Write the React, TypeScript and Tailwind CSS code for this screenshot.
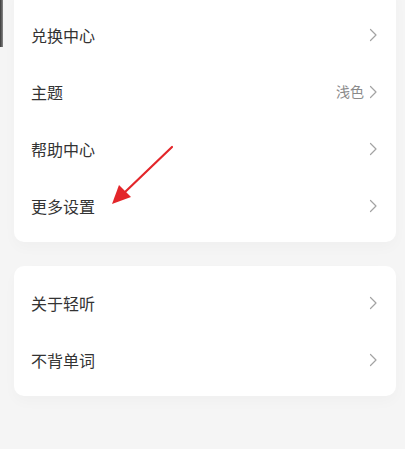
import React from 'react';

const Chevron: React.FC = () => (
  <svg width="8" height="14" viewBox="0 0 8 14" fill="none" className="shrink-0">
    <path d="M1.5 1.5L7 7L1.5 12.5" stroke="#a3a3a3" strokeWidth="1.2" strokeLinecap="round" strokeLinejoin="round" />
  </svg>
);

type Item = { label: string; value?: string };

const Row: React.FC<{ item: Item }> = ({ item }) => (
  <div className="h-[57px] flex items-center justify-between pl-[17px] pr-[19px]">
    <span className="text-[16px] text-[#333333]">{item.label}</span>
    <div className="flex items-center gap-[5px]">
      {item.value && <span className="text-[14px] text-[#8a8a8a]">{item.value}</span>}
      <Chevron />
    </div>
  </div>
);

const Card: React.FC<{ items: Item[]; className?: string }> = ({ items, className }) => (
  <div className={`bg-white rounded-[10px] py-[8px] shadow-[0_6px_14px_rgba(0,0,0,0.025)] ${className ?? ''}`}>
    {items.map((it) => (
      <Row key={it.label} item={it} />
    ))}
  </div>
);

export default function App() {
  return (
    <div
      className="relative w-[405px] h-[449px] overflow-hidden bg-[#f5f5f5] pl-[14px] pr-[9px]"
      style={{ fontFamily: '"Noto Sans CJK SC", "Noto Sans", sans-serif' }}
    >
      <Card
        className="-mt-[14px] pt-[20px]"
        items={[{ label: '兑换中心' }, { label: '主题', value: '浅色' }, { label: '帮助中心' }, { label: '更多设置' }]}
      />
      <Card className="mt-[24px]" items={[{ label: '关于轻听' }, { label: '不背单词' }]} />

      <div className="absolute left-0 top-0 w-[3px] h-[47px] bg-gradient-to-r from-[#3a3a3a] to-[#8a8a8a]" />

      <svg className="absolute left-0 top-0 pointer-events-none" width="405" height="449">
        <line x1="172" y1="147" x2="124" y2="193" stroke="#e3262a" strokeWidth="2.2" strokeLinecap="round" />
        <polygon points="112,204 119,185 131,197" fill="#e3262a" />
      </svg>
    </div>
  );
}
